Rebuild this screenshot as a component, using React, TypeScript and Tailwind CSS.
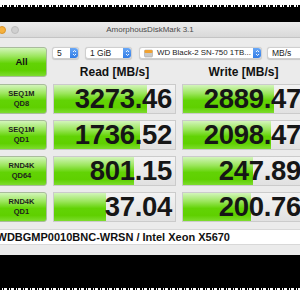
const rows = [
  { a: "SEQ1M", b: "QD8", read: "3273.46", rb: 93, write: "2889.47", wb: 91 },
  { a: "SEQ1M", b: "QD1", read: "1736.52", rb: 86, write: "2098.47", wb: 88 },
  { a: "RND4K", b: "QD64", read: "801.15", rb: 80, write: "247.89", wb: 70 },
  { a: "RND4K", b: "QD1", read: "37.04", rb: 52, write: "200.76", wb: 68 },
];

const green =
  "bg-[linear-gradient(180deg,#d3f5bb_0%,#9be65c_30%,#62d305_55%,#5fd000_80%,#7ddc2e_100%)]";

function Stepper() {
  return (
    <div className="flex h-full w-[8px] shrink-0 flex-col items-center justify-center rounded-r-[3px] bg-[linear-gradient(180deg,#6aa8f5,#2f7be6)]">
      <svg width="5" height="8" viewBox="0 0 5 8">
        <path d="M1 3 L2.5 1.5 L4 3 M1 5 L2.5 6.5 L4 5" fill="none" stroke="#fff" strokeWidth="0.9" />
      </svg>
    </div>
  );
}

function Select({ w, children }: { w: string; children: React.ReactNode }) {
  return (
    <div className={`flex h-[12px] shrink-0 items-center rounded-[3px] border border-[#cfcfcf] bg-white shadow-[0_0.5px_1px_rgba(0,0,0,0.15)] ${w}`}>
      <div className="flex min-w-0 flex-1 items-center gap-[4px] overflow-hidden whitespace-nowrap pl-[4px] text-[8.5px] leading-none text-[#222]">
        {children}
      </div>
      <Stepper />
    </div>
  );
}

function Cell({ value, bar }: { value: string; bar: number }) {
  return (
    <div className="relative h-full w-[123px] shrink-0 overflow-hidden border border-[#cbcbcb] bg-[linear-gradient(180deg,#f3f3f3,#e1e1e1)]">
      <div className={`h-full ${green}`} style={{ width: `${bar}px` }} />
      <div className="absolute inset-0 flex items-center justify-end pr-[3px] text-[27.5px] font-bold leading-none tracking-[-0.3px] text-[#161616]">
        {value}
      </div>
    </div>
  );
}

export default function App() {
  return (
    <div className="flex h-[300px] w-[300px] flex-col overflow-hidden bg-black font-['Liberation_Sans',Arial,sans-serif]">
      <div className="h-[5px] shrink-0 bg-white" />
      <div className="h-[2px] shrink-0 bg-[repeating-linear-gradient(90deg,#fff_0_2px,#000_2px_3px,#fff_3px_4px,#000_4px_7px)]" />
      <div className="h-[15px] shrink-0" />

      <div className="ml-[-20px] flex h-[233px] w-[340px] shrink-0 flex-col bg-[#ebebeb]">
        <div className="grid h-[16px] shrink-0 grid-cols-[1fr_auto_1fr] items-center border-b border-[#c4c4c4] bg-[linear-gradient(180deg,#ececec,#d9d9d9)]">
          <div className="flex items-center gap-[5px] pl-[5px]">
            <span className="h-[8px] w-[8px] rounded-full bg-[#ee5f57]" />
            <span className="h-[8px] w-[8px] rounded-full border border-[#d9952c] bg-[#f6b13d]" />
            <span className="h-[8px] w-[8px] rounded-full border border-[#bdbdbd] bg-[#d0d0d0]" />
          </div>
          <div className="text-[8px] leading-none text-[#4a4a4a]">AmorphousDiskMark 3.1</div>
          <div />
        </div>

        <div className="flex flex-col pl-[16px] pt-[9px]">
          <div className="flex h-[37px] gap-[6px]">
            <div className={`flex h-[30px] w-[51px] items-center justify-center rounded-[3px] border border-[#a9bc9c] text-[9.5px] font-bold text-[#111] ${green}`}>
              All
            </div>
            <div className="flex flex-col">
              <div className="ml-[-1px] flex h-[12px]">
                <Select w="w-[27px]">5</Select>
                <div className="w-[6px]" />
                <Select w="w-[47px]">1 GiB</Select>
                <div className="w-[7px]" />
                <Select w="w-[123px]">
                  <svg width="9" height="9" viewBox="0 0 9 9" className="shrink-0">
                    <rect x="0.5" y="1" width="8" height="7" rx="1" fill="#c9c9c9" stroke="#9a9a9a" strokeWidth="0.5" />
                    <rect x="0.5" y="1" width="8" height="3" rx="1" fill="#f0a232" />
                  </svg>
                  <span className="text-[7.9px]">WD Black-2 SN-750 1TB...</span>
                </Select>
                <div className="w-[5px]" />
                <Select w="w-[45px]">MB/s</Select>
              </div>
              <div className="flex flex-1 items-center gap-[6px]">
                <div className="w-[123px] text-center text-[12px] font-bold text-[#111]">Read [MB/s]</div>
                <div className="w-[123px] text-center text-[12px] font-bold text-[#111]">Write [MB/s]</div>
              </div>
            </div>
          </div>

          <div className="flex flex-col gap-[6.5px]">
            {rows.map((r, i) => (
              <div key={i} className="flex h-[29.5px] gap-[6px]">
                <div className={`flex w-[51px] flex-col items-center justify-center rounded-[3px] border border-[#a9bc9c] text-[7.5px] font-semibold leading-[10px] text-[#1e1e1e] ${green}`}>
                  <span>{r.a}</span>
                  <span>{r.b}</span>
                </div>
                <Cell value={r.read} bar={r.rb} />
                <Cell value={r.write} bar={r.wb} />
              </div>
            ))}
          </div>

          <div className="ml-[-4px] mt-[7.5px] flex h-[16px] w-[330px] items-center border-y border-[#d8d8d8] bg-white pl-[4.5px] text-[11px] font-bold text-[#111]">
            WDBGMP0010BNC-WRSN / Intel Xeon X5670
          </div>
        </div>
      </div>

      <div className="flex-1" />
      <div className="h-[2px] shrink-0 bg-[repeating-linear-gradient(90deg,#000_0_2px,#fff_2px_3px,#000_3px_4px,#fff_4px_7px)]" />
      <div className="h-[10px] shrink-0 bg-white" />
    </div>
  );
}
